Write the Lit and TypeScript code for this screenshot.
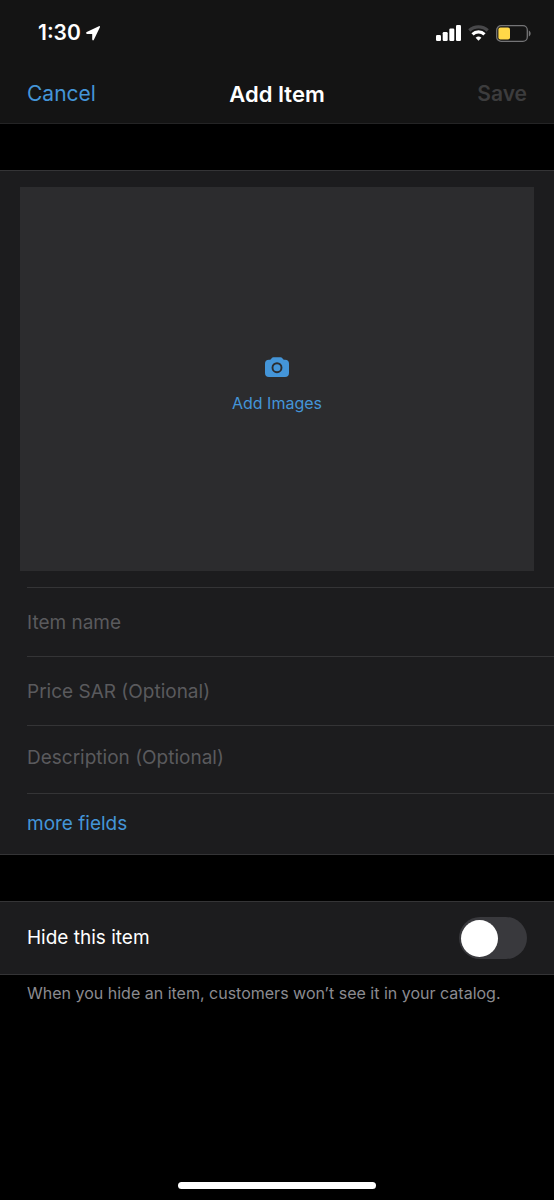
import { LitElement, html, css } from "lit";
import { customElement, state } from "lit/decorators.js";

@customElement("status-bar")
class StatusBar extends LitElement {
  static styles = css`
    :host {
      display: flex;
      align-items: center;
      justify-content: space-between;
      height: 66px;
      padding: 0 23px 0 38px;
      box-sizing: border-box;
    }
    .side {
      display: flex;
      align-items: center;
    }
    .clock {
      gap: 5px;
      font-size: 21px;
      line-height: 24px;
      font-weight: 600;
    }
    .indicators {
      gap: 7px;
    }
    svg {
      display: block;
    }
  `;

  render() {
    return html`
      <div class="side clock">
        <span>1:30</span>
        <svg width="14" height="15" viewBox="0 0 14 15" aria-hidden="true">
          <path d="M12.900.2.700 6.100C-.3 6.700 0 7.900 1 7.900h4.800c.3 0 .4.1.4.4v5c0 1.300 1.200 1.500 1.800.2L13.900 1.300c.3-.8-.2-1.400-1-1.100Z" fill="#fff" />
        </svg>
      </div>
      <div class="side indicators">
        <svg width="25" height="16" viewBox="0 0 25 16" fill="#fff" role="img" aria-label="Signal">
          <rect x="0" y="10" width="5" height="6" rx="1.2" />
          <rect x="6.7" y="7" width="5" height="9" rx="1.2" />
          <rect x="13.3" y="3.6" width="5" height="12.4" rx="1.2" />
          <rect x="20" y="0" width="5" height="16" rx="1.2" />
        </svg>
        <svg width="21" height="16" viewBox="0 0 21 16" fill="none" role="img" aria-label="Wi-Fi">
          <path d="M1.300 5.500a13.300 13.300 0 0 1 18.400 0" stroke="#48484a" stroke-width="3.200" />
          <path d="M4.500 9.300a8.700 8.700 0 0 1 12 0" stroke="#fff" stroke-width="3.200" />
          <path d="M7.600 12.700a4.500 4.500 0 0 1 5.800 0L10.500 15.800Z" fill="#fff" />
        </svg>
        <svg width="35" height="17" viewBox="0 0 35 17" fill="none" role="img" aria-label="Battery">
          <rect x=".7" y=".7" width="30.6" height="15.6" rx="4.4" stroke="#747476" stroke-width="1.3" />
          <rect x="2.4" y="2.6" width="11.6" height="11.8" rx="2" fill="#ffd848" />
          <path d="M32.8 5.600c2.400 1 2.400 4.800 0 5.800Z" fill="#747476" />
        </svg>
      </div>
    `;
  }
}

@customElement("toggle-switch")
class ToggleSwitch extends LitElement {
  static properties = { label: { type: String } };
  declare label: string;

  static styles = css`
    :host {
      display: block;
    }
    input {
      appearance: none;
      display: flex;
      align-items: center;
      box-sizing: border-box;
      width: 68px;
      height: 42px;
      margin: 0;
      padding: 2px;
      border-radius: 21px;
      background: #39393d;
      cursor: pointer;
    }
    input::before {
      content: "";
      width: 37px;
      height: 37px;
      border-radius: 50%;
      background: #fff;
    }
    input:checked {
      background: #30d158;
      justify-content: flex-end;
    }
  `;

  render() {
    return html`<input type="checkbox" role="switch" aria-label=${this.label} />`;
  }
}

@customElement("app-root")
class AppRoot extends LitElement {
  @state() private name = "";

  static styles = css`
    :host {
      display: flex;
      flex-direction: column;
      min-height: 100vh;
      box-sizing: border-box;
      background: #000;
      color: #fff;
      font-family: Inter, "Liberation Sans", sans-serif;
      font-size: 19px;
      line-height: 24px;
    }
    button,
    input,
    textarea {
      font: inherit;
      border: 0;
      padding: 0;
      margin: 0;
      background: none;
      border-radius: 0;
    }
    button {
      color: #4495d8;
      cursor: pointer;
    }
    .top {
      background: #141414;
      border-bottom: 1px solid #242425;
    }
    .nav {
      display: grid;
      grid-template-columns: 1fr auto 1fr;
      align-items: center;
      height: 55px;
      padding: 0 27px 2px;
      font-size: 21px;
    }
    .title {
      margin: 0;
      font-size: 22px;
      font-weight: 600;
    }
    .cancel {
      justify-self: start;
    }
    .save {
      justify-self: end;
      font-weight: 600;
    }
    .save:disabled {
      color: #3c3c3d;
      cursor: default;
    }
    .group {
      margin-top: 46px;
      background: #1c1c1e;
      border-top: 1px solid #343436;
      border-bottom: 1px solid #343436;
    }
    .images {
      display: flex;
      flex-direction: column;
      align-items: center;
      justify-content: center;
      gap: 14px;
      box-sizing: border-box;
      width: calc(100% - 40px);
      height: 384px;
      margin: 16px 20px;
      padding-top: 14px;
      background: #2c2c2e;
      font-size: 16px;
    }
    .images svg {
      display: block;
    }
    .rows {
      padding-left: 27px;
    }
    .row {
      display: block;
      border-top: 1px solid #343436;
    }
    .row input,
    .row textarea {
      display: block;
      box-sizing: border-box;
      width: 100%;
      height: 68px;
      color: #fff;
      outline: none;
      resize: none;
    }
    .row textarea {
      height: 67px;
      padding: 20px 27px 20px 0;
    }
    .row ::placeholder {
      color: #5a5a5d;
      opacity: 1;
    }
    .row button {
      display: block;
      height: 60px;
    }
    .toggle {
      display: flex;
      align-items: center;
      justify-content: space-between;
      height: 72px;
      padding: 0 27px;
    }
    .note {
      margin: 0;
      padding: 6px 27px;
      color: #8b8b90;
      font-size: 16px;
    }
    .home {
      align-self: center;
      width: 198px;
      height: 7px;
      margin: auto 0 11px;
      border-radius: 4px;
      background: #fff;
    }
  `;

  private onName(e: Event) {
    this.name = (e.target as HTMLInputElement).value;
  }

  render() {
    return html`
      <header class="top">
        <status-bar></status-bar>
        <nav class="nav">
          <button class="cancel">Cancel</button>
          <h1 class="title">Add Item</h1>
          <button class="save" ?disabled=${!this.name}>Save</button>
        </nav>
      </header>

      <section class="group">
        <button class="images">
          <svg width="24" height="20" viewBox="0 0 24 20" aria-hidden="true">
            <path fill="#4495d8" d="M8.500.2h7c.8 0 1.300.3 1.700.9l.7 1c.3.4.7.6 1.200.6h.9c2.600 0 4 1.400 4 4v9.300c0 2.600-1.400 4-4 4H4c-2.600 0-4-1.400-4-4V6.700c0-2.600 1.400-4 4-4h.9c.5 0 .9-.2 1.200-.6l.7-1C7.200.5 7.700.2 8.500.2Z" />
            <circle cx="12" cy="10.700" r="4.500" fill="none" stroke="#2c2c2e" stroke-width="1.900" />
          </svg>
          <span>Add Images</span>
        </button>
        <div class="rows">
          <div class="row">
            <input type="text" name="name" placeholder="Item name" aria-label="Item name" @input=${this.onName} />
          </div>
          <div class="row">
            <input type="text" name="price" placeholder="Price SAR (Optional)" aria-label="Price SAR (Optional)" />
          </div>
          <div class="row">
            <textarea
              name="description"
              rows="1"
              placeholder="Description (Optional)"
              aria-label="Description (Optional)"
            ></textarea>
          </div>
          <div class="row"><button>more fields</button></div>
        </div>
      </section>

      <section class="group">
        <div class="toggle">
          <span>Hide this item</span>
          <toggle-switch label="Hide this item"></toggle-switch>
        </div>
      </section>
      <p class="note">When you hide an item, customers won’t see it in your catalog.</p>

      <div class="home"></div>
    `;
  }
}
